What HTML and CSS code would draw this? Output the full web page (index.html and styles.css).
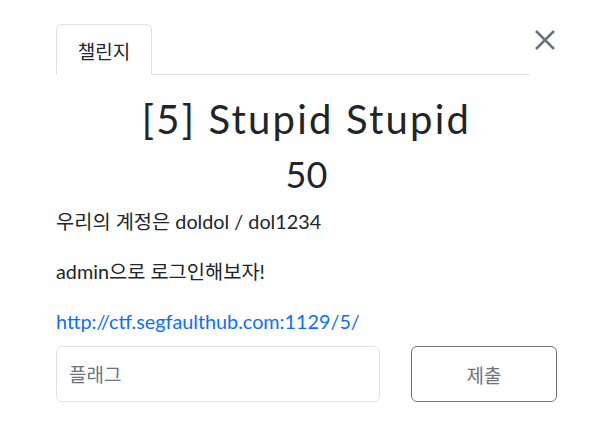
FILE: index.html
```html
<!DOCTYPE html>
<html lang="ko">
<head>
    <meta charset="UTF-8">
    <meta name="viewport" content="width=device-width, initial-scale=1.0">
    <title>챌린지</title>
    <link rel="stylesheet" href="styles.css">
</head>
<body>
    <div class="modal-body">
        <div class="modal-head">
            <ul class="nav-tabs">
                <li class="tab active">챌린지</li>
            </ul>
            <button class="close" aria-label="Close">
                <svg width="22" height="22" viewBox="0 0 22 22">
                    <path d="M1 2 L19 20 M19 2 L1 20" stroke="#6c757d" stroke-width="2.6" fill="none"/>
                </svg>
            </button>
        </div>
        <h2 class="challenge-name">[5] Stupid Stupid</h2>
        <h3 class="challenge-value">50</h3>
        <div class="challenge-desc">
            <p>우리의 계정은 doldol / dol1234</p>
            <p>admin으로 로그인해보자!</p>
            <p><a href="#">http://ctf.segfaulthub.com:1129/5/</a></p>
        </div>
        <form class="submit-row">
            <input class="flag-input" type="text" placeholder="플래그">
            <button class="submit-btn" type="button">제출</button>
        </form>
    </div>
</body>
</html>
```

FILE: styles.css
```css
body {
    margin: 0;
    background: #fff;
    color: #212529;
    font-family: Lato, "Noto Sans CJK KR", sans-serif;
}
.modal-body {
    padding: 24px 54px 0 56px;
}
.modal-head {
    display: flex;
    align-items: flex-start;
}
.nav-tabs {
    flex: 1;
    display: flex;
    margin: 0;
    padding: 0;
    list-style: none;
    border-bottom: 1px solid #dee2e6;
}
.tab {
    width: 96px;
    height: 51px;
    box-sizing: border-box;
    border: 1px solid #dee2e6;
    border-bottom: none;
    border-radius: 6px 6px 0 0;
    margin-bottom: -1px;
    background: #fff;
    display: flex;
    align-items: center;
    justify-content: center;
    font-size: 19px;
    padding-top: 1px;
}
.close {
    border: none;
    background: none;
    padding: 0;
    margin: 5px 0 0 5px;
    width: 22px;
    height: 22px;
    cursor: pointer;
}
.challenge-name {
    margin: 0;
    padding-top: 20px;
    text-align: center;
    font-size: 40px;
    font-weight: 400;
    letter-spacing: 2.2px;
    line-height: 48px;
}
.challenge-value {
    margin: 0;
    padding-top: 9px;
    text-align: center;
    font-size: 36px;
    font-weight: 400;
    line-height: 44px;
}
.challenge-desc {
    font-size: 19.8px;
    padding-top: 10px;
}
.challenge-desc p {
    margin: 0;
    line-height: 30px;
    margin-top: 20px;
}
.challenge-desc p:first-child {
    margin-top: 0;
}
.challenge-desc a {
    color: #0d6efd;
    text-decoration: none;
}
.submit-row {
    display: grid;
    grid-template-columns: 1fr 146px;
    gap: 31px;
    margin-top: 10px;
}
.flag-input {
    height: 56px;
    box-sizing: border-box;
    border: 1px solid #dee2e6;
    border-radius: 6px;
    padding: 0 12px;
    font-family: Lato, "Noto Sans CJK KR", sans-serif;
    font-size: 19px;
    color: #212529;
}
.flag-input::placeholder {
    color: #6c757d;
}
.submit-btn {
    height: 56px;
    border: 1px solid #6c757d;
    border-radius: 6px;
    background: #fff;
    color: #6c757d;
    font-family: Lato, "Noto Sans CJK KR", sans-serif;
    font-size: 19px;
}
```
